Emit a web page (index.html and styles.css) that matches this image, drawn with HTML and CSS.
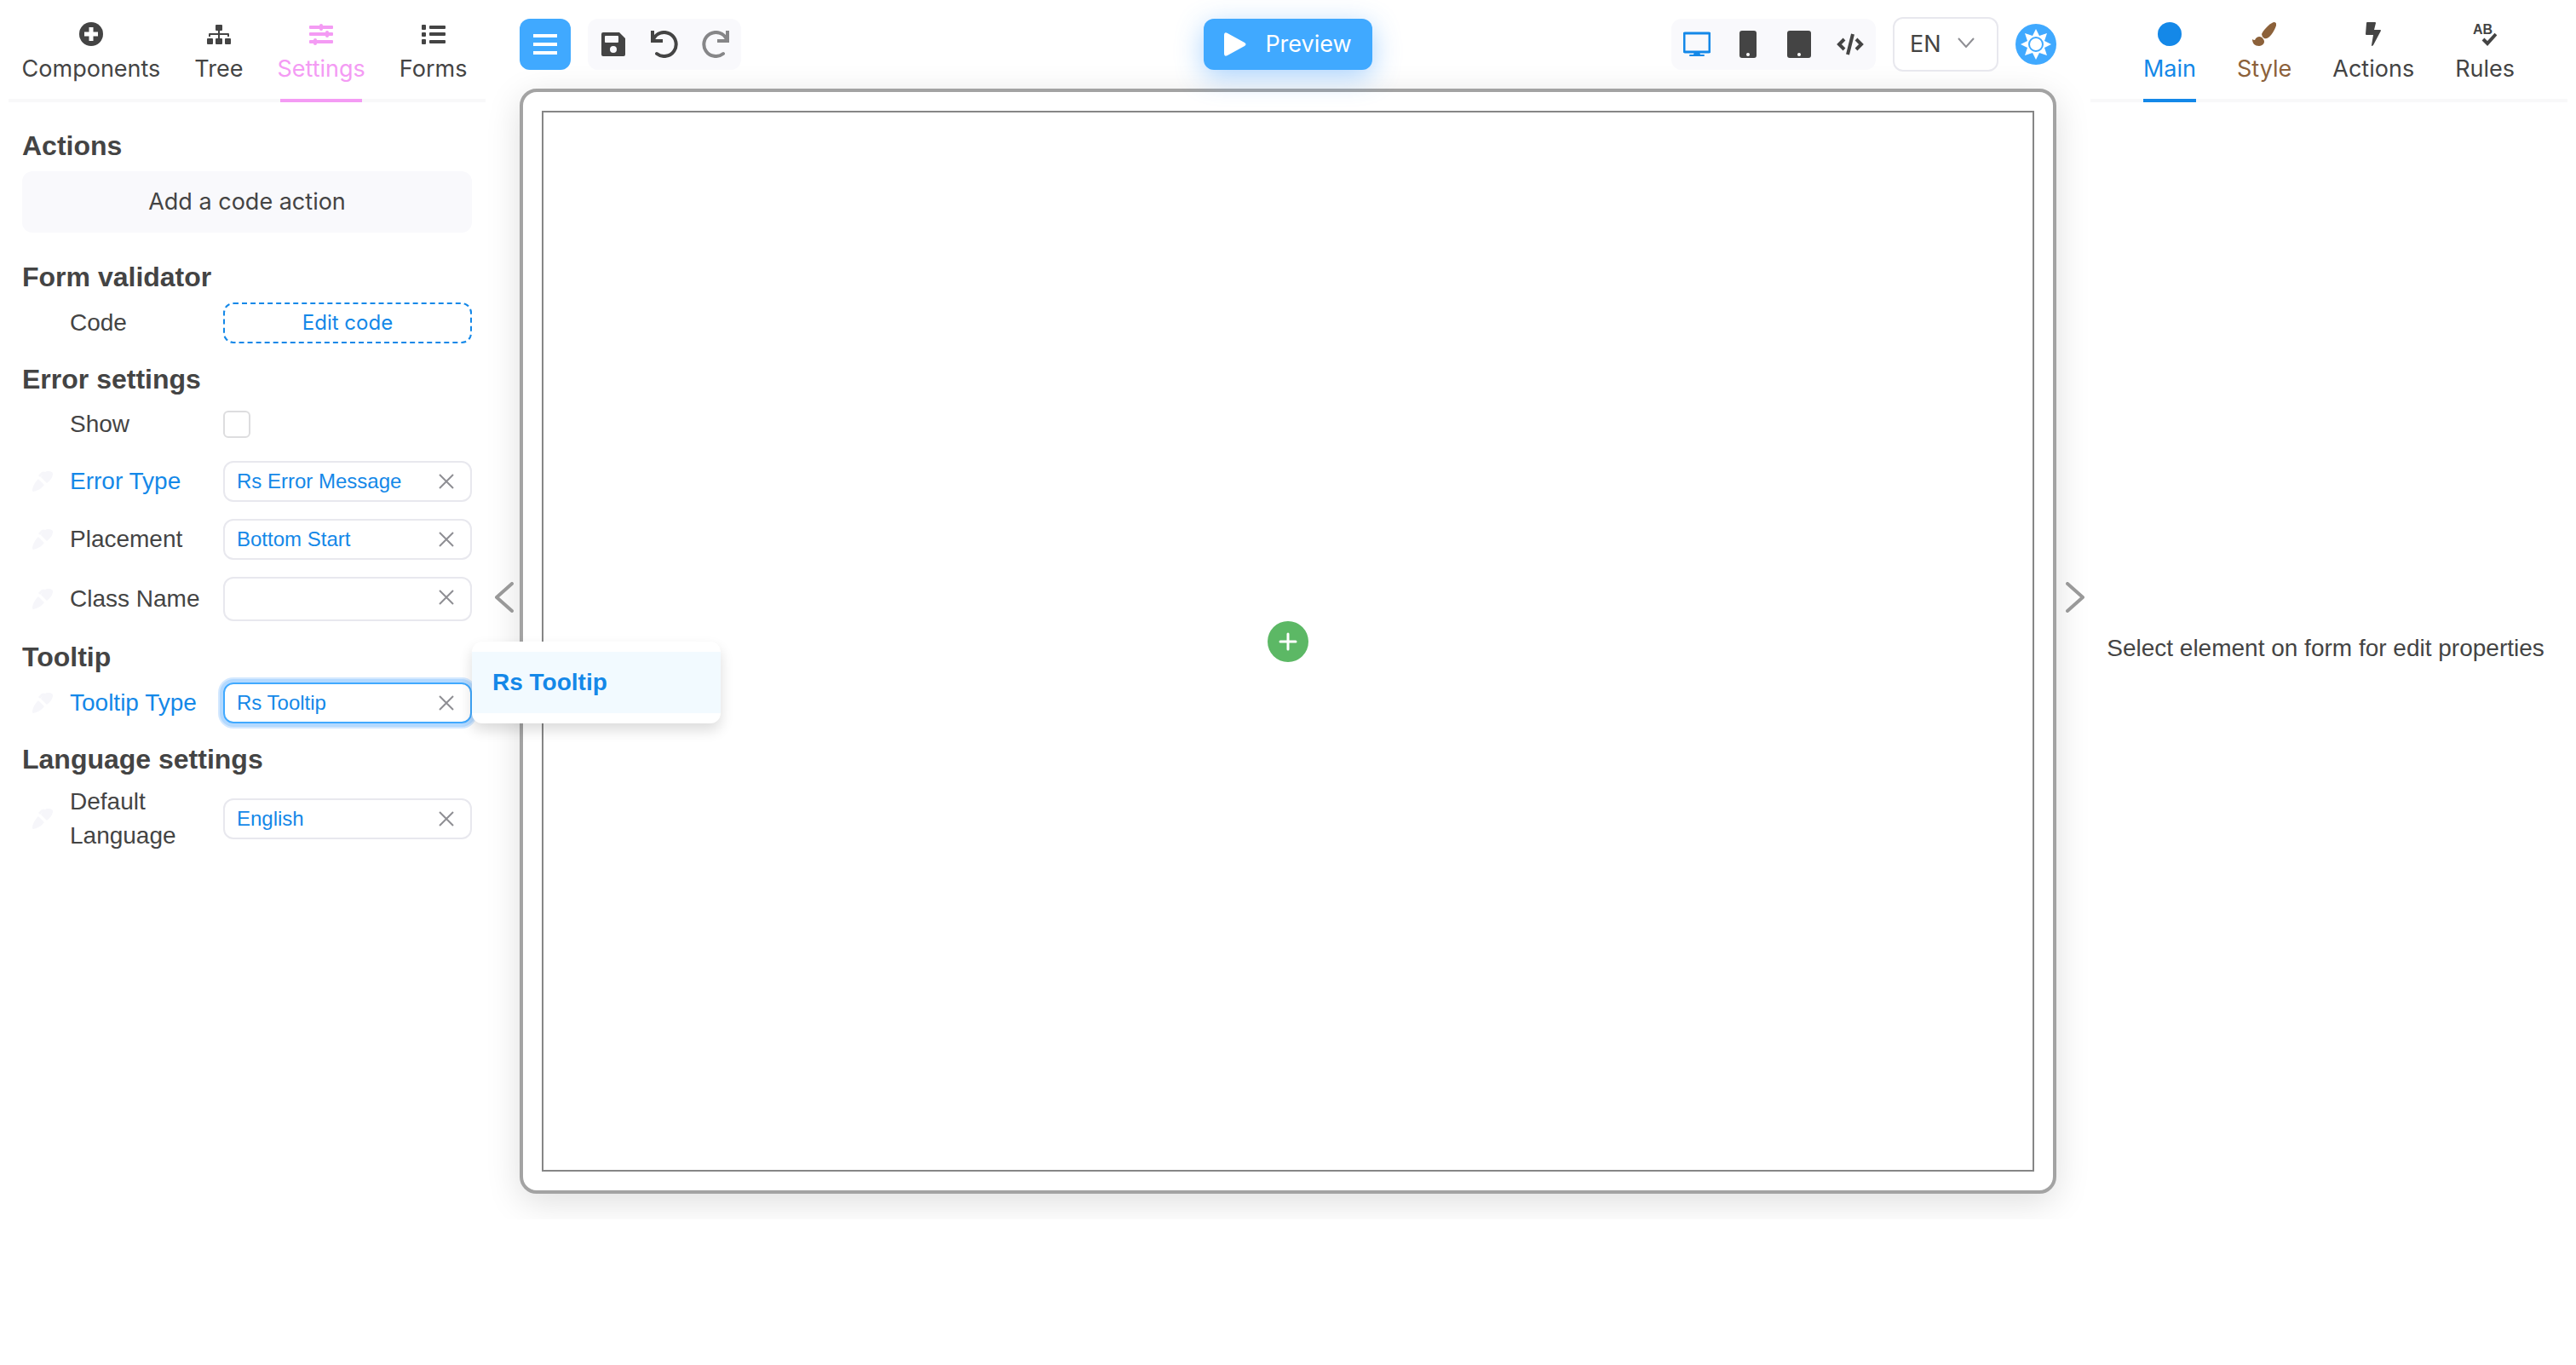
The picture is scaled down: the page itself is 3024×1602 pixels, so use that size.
FILE: index.html
```html
<!DOCTYPE html>
<html lang="en">
<head>
    <meta charset="UTF-8">
    <meta name="viewport" content="width=device-width, initial-scale=1.0">
    <title>Form designer</title>

    <link rel="stylesheet" href="styles.css">

</head>
<body>

    <!-- shared icons -->
    <svg class="icon-defs" aria-hidden="true">
        <symbol id="close" viewBox="0 0 18 18">
            <path d="M1 1L17 17M17 1L1 17" fill="none" stroke="#8e8e93" stroke-width="2"/>
        </symbol>
        <symbol id="dropper" viewBox="0 0 24 24">
            <path d="M7 5l4-4q2-1 4 0c3-2 9-1 9 2 0 4-3 8-7 11l-7-7 2-3-3 3zM7 9l7 7c-4 5-8 7-13 8l-1-1c0-5 3-10 7-14z" fill="#f6f6fa"/>
        </symbol>
    </svg>

    <div class="app">

        <aside class="panel panel-left">

            <nav class="tabs">
                <button class="tab">
                    <svg class="tab-icon" viewBox="0 0 28 28"><circle cx="14" cy="14" r="14" fill="currentColor"/><path d="M14 6v16M6 14h16" stroke="#fff" stroke-width="5"/></svg>
                    Components
                </button>
                <button class="tab">
                    <svg class="tab-icon" viewBox="0 0 28 28" fill="currentColor"><rect x="10" y="3" width="8" height="7" rx="1"/><rect y="19" width="7" height="7" rx="1"/><rect x="10" y="19" width="8" height="7" rx="1"/><rect x="21" y="19" width="7" height="7" rx="1"/><path d="M13 9h2v4h10q1 0 1 1v3h-2v-2h-9v4h-2v-4H4v2H2v-3q0-1 1-1h10z"/></svg>
                    Tree
                </button>
                <button class="tab tab-settings active">
                    <svg class="tab-icon" viewBox="0 0 28 28" fill="currentColor"><rect y="4" width="28" height="4" rx="1"/><rect y="12" width="28" height="4" rx="1"/><rect y="21" width="28" height="4" rx="1"/><rect x="12" y="2" width="4" height="8" rx="2"/><rect x="19" y="10" width="4" height="8" rx="2"/><rect x="5" y="19" width="4" height="8" rx="2"/></svg>
                    Settings
                </button>
                <button class="tab">
                    <svg class="tab-icon" viewBox="0 0 28 28" fill="currentColor"><rect y="3" width="5" height="6" rx="1"/><rect y="12" width="5" height="5" rx="1"/><rect y="20" width="5" height="6" rx="1"/><rect x="9" y="4" width="19" height="4" rx="1"/><rect x="9" y="12" width="19" height="4" rx="1"/><rect x="9" y="21" width="19" height="4" rx="1"/></svg>
                    Forms
                </button>
            </nav>

            <div class="settings">
                <h2>Actions</h2>
                <button class="btn-add">Add a code action</button>

                <h2 class="after-button">Form validator</h2>
                <div class="row">
                    <span class="label">Code</span>
                    <button class="btn-code">Edit code</button>
                </div>

                <h2>Error settings</h2>
                <div class="row row-check">
                    <label class="label" for="show">Show</label>
                    <input class="check" type="checkbox" id="show">
                </div>
                <div class="row">
                    <svg class="dropper"><use href="#dropper"/></svg>
                    <label class="label blue" for="error-type">Error Type</label>
                    <div class="control">
                        <select class="field" id="error-type"><option>Rs Error Message</option></select>
                        <button class="clear" aria-label="Clear"><svg><use href="#close"/></svg></button>
                    </div>
                </div>
                <div class="row">
                    <svg class="dropper"><use href="#dropper"/></svg>
                    <label class="label" for="placement">Placement</label>
                    <div class="control">
                        <select class="field" id="placement"><option>Bottom Start</option></select>
                        <button class="clear" aria-label="Clear"><svg><use href="#close"/></svg></button>
                    </div>
                </div>
                <div class="row">
                    <svg class="dropper"><use href="#dropper"/></svg>
                    <label class="label" for="class-name">Class Name</label>
                    <div class="control">
                        <input class="field field-text" type="text" id="class-name">
                        <button class="clear" aria-label="Clear"><svg><use href="#close"/></svg></button>
                    </div>
                </div>

                <h2>Tooltip</h2>
                <div class="row">
                    <svg class="dropper"><use href="#dropper"/></svg>
                    <label class="label blue" for="tooltip-type">Tooltip Type</label>
                    <div class="control">
                        <select class="field focused" id="tooltip-type"><option>Rs Tooltip</option></select>
                        <button class="clear" aria-label="Clear"><svg><use href="#close"/></svg></button>
                        <div class="dropdown">
                            <button class="dropdown-item">Rs Tooltip</button>
                        </div>
                    </div>
                </div>

                <h2>Language settings</h2>
                <div class="row">
                    <svg class="dropper"><use href="#dropper"/></svg>
                    <label class="label" for="language">Default Language</label>
                    <div class="control">
                        <select class="field" id="language"><option>English</option></select>
                        <button class="clear" aria-label="Clear"><svg><use href="#close"/></svg></button>
                    </div>
                </div>
            </div>

        </aside>

        <main class="center">

            <button class="toggle" aria-label="Hide left panel">
                <svg viewBox="0 0 22 36"><path d="M20 2L2 18l18 16"/></svg>
            </button>

            <div class="workspace">
                <div class="toolbar">
                    <div class="tools">
                        <button class="tool tool-menu" aria-label="Menu">
                            <svg viewBox="0 0 32 32" fill="#fff"><rect x="2" y="4" width="28" height="4"/><rect x="2" y="14" width="28" height="4"/><rect x="2" y="24" width="28" height="4"/></svg>
                        </button>
                        <div class="group">
                            <button class="tool" aria-label="Save">
                                <svg viewBox="0 0 32 32"><path fill="currentColor" fill-rule="evenodd" d="M4 2h19l7 7v19q0 2-2 2H4q-2 0-2-2V4q0-2 2-2zM7 6q-1 0-1 1v6q0 1 1 1h14q1 0 1-1V7q0-1-1-1zM16 18a4 4 0 1 0 0 8 4 4 0 0 0 0-8z"/></svg>
                            </button>
                            <button class="tool" aria-label="Undo">
                                <svg viewBox="0 0 32 32" fill="none" stroke="currentColor"><path d="M3 10A14 14 0 1 1 7 27" stroke-width="4" stroke-linecap="round"/><path d="M2 0v12h12" stroke-width="4"/></svg>
                            </button>
                            <button class="tool tool-off" aria-label="Redo">
                                <svg viewBox="0 0 32 32" fill="none" stroke="currentColor"><path d="M29 10A14 14 0 1 0 25 27" stroke-width="4" stroke-linecap="round"/><path d="M30 0v12H18" stroke-width="4"/></svg>
                            </button>
                        </div>
                    </div>

                    <button class="preview">
                        <svg viewBox="0 0 26 28"><path d="M0 3Q0-1 4 1l20 11q3 2 0 4L4 27q-4 2-4-2z" fill="#fff"/></svg>
                        Preview
                    </button>

                    <div class="tools tools-right">
                        <div class="group">
                            <button class="tool tool-on" aria-label="Desktop">
                                <svg viewBox="0 0 32 32"><rect x="1" y="3" width="30" height="22" rx="1" fill="none" stroke="currentColor" stroke-width="3"/><path d="M13 25h6l1 3h4q1 0 1 1t-1 1H8q-1 0-1-1t1-1h4z" fill="currentColor"/></svg>
                            </button>
                            <button class="tool" aria-label="Phone">
                                <svg viewBox="0 0 32 32"><rect x="6" width="20" height="32" rx="3" fill="currentColor"/><circle cx="16" cy="28" r="2" fill="#fff"/></svg>
                            </button>
                            <button class="tool" aria-label="Tablet">
                                <svg viewBox="0 0 32 32"><rect x="2" width="28" height="32" rx="3" fill="currentColor"/><circle cx="16" cy="28" r="2" fill="#fff"/></svg>
                            </button>
                            <button class="tool" aria-label="Code">
                                <svg viewBox="0 0 32 32" fill="none" stroke="currentColor" stroke-width="4"><path d="M9 10l-6 6 6 6M23 10l6 6-6 6M19 4l-6 24"/></svg>
                            </button>
                        </div>
                        <div class="lang">
                            <select aria-label="Language"><option>EN</option></select>
                            <svg viewBox="0 0 20 12"><path d="M1 1l9 10 9-10" fill="none" stroke="#8e8e93" stroke-width="2"/></svg>
                        </div>
                        <button class="theme" aria-label="Theme">
                            <svg viewBox="0 0 48 48"><path d="M24 6l4 8 9-3-3 9 8 4-8 4 3 9-9-3-4 8-4-8-9 3 3-9-8-4 8-4-3-9 9 3z" fill="#fff"/><circle cx="24" cy="24" r="8" fill="#fff" stroke="#40a9ff" stroke-width="2"/></svg>
                        </button>
                    </div>
                </div>

                <div class="frame">
                    <div class="form-area">
                        <button class="add" aria-label="Add component">
                            <svg viewBox="0 0 22 22"><path d="M11 2v18M2 11h18" stroke="#fff" stroke-width="3" stroke-linecap="round"/></svg>
                        </button>
                    </div>
                </div>
            </div>

            <button class="toggle" aria-label="Hide right panel">
                <svg viewBox="0 0 22 36"><path d="M2 2l18 16L2 34"/></svg>
            </button>

        </main>

        <aside class="panel panel-right">

            <nav class="tabs">
                <button class="tab tab-main active">
                    <svg class="tab-icon" viewBox="0 0 28 28"><circle cx="14" cy="14" r="14" fill="currentColor"/></svg>
                    Main
                </button>
                <button class="tab tab-style">
                    <svg class="tab-icon" viewBox="0 0 28 28" fill="currentColor"><path d="M25 0q4 0 3 4c-2 6-6 12-9 14q-3 2-5 1-3-2-3-5C13 9 20 2 25 0z"/><path d="M0 20q1 1 3 1c2-5 8-5 10-1 3 4-1 8-5 8-5 0-8-3-8-8z"/></svg>
                    Style
                </button>
                <button class="tab">
                    <svg class="tab-icon" viewBox="0 0 28 28"><path d="M7 0h9q1 0 1 1l-2 8h7q1 0 1 1l-9 17q-1 1-2 1v-1l2-12H6q-1 0-1-1L6 1q0-1 1-1z" fill="currentColor"/></svg>
                    Actions
                </button>
                <button class="tab">
                    <svg class="tab-icon" viewBox="0 0 28 28"><text x="0" y="14" class="ab">AB</text><path d="M12 20l5 5 10-11" fill="none" stroke="currentColor" stroke-width="4"/></svg>
                    Rules
                </button>
            </nav>

            <p class="empty">Select element on form for edit properties</p>

        </aside>

    </div>

</body>
</html>
```
FILE: styles.css
```css
:root {
    --text: #444444;
    --blue: #1488e8;
    --light-blue: #40a9ff;
    --pink: #f49bf4;
    --brown: #8c613a;
    --grey-bg: #f9f9fc;
    --border: #e8e8ee;
    --ui-font: Inter, "Liberation Sans", sans-serif;
}

*, *::before, *::after {
    margin: 0;
    padding: 0;
    box-sizing: border-box;
}

body {
    background-color: white;
    color: var(--text);
    font-family: "Liberation Sans", Arial, sans-serif;
    font-size: 28px;
    line-height: 40px;
}

button, input, select {
    font: inherit;
    color: inherit;
    border: none;
    background: none;
    outline: none;
    appearance: none;
}

button {
    cursor: pointer;
}

svg {
    display: block;
    flex: none;
}

.icon-defs {
    position: absolute;
    width: 0;
    height: 0;
}

.app {
    display: grid;
    grid-template-columns: 570px 1fr 570px;
    height: calc(100vh - 171px);
    min-height: 1100px;
}

/* side panels */

.panel {
    display: flex;
    flex-direction: column;
    padding-bottom: 30px;
}

.panel-left {
    position: relative;
    z-index: 1;
    padding-left: 10px;
}

.panel-right {
    padding-right: 10px;
}

.tabs {
    display: flex;
    justify-content: center;
    gap: 40px;
    border-bottom: 4px solid #f8f8f9;
}

.panel-left .tabs {
    padding-right: 6px;
}

.panel-right .tabs {
    gap: 48px;
}

.tab {
    position: relative;
    display: flex;
    flex-direction: column;
    align-items: center;
    gap: 7px;
    padding: 26px 0 15px;
    font-family: var(--ui-font);
    font-size: 27px;
}

.tab.active::after {
    content: '';
    position: absolute;
    left: 0;
    right: 0;
    bottom: -4px;
    height: 4px;
    background-color: currentColor;
}

.tab-settings.active::after {
    left: 4px;
    right: 4px;
}

.tab-icon {
    width: 28px;
    height: 28px;
}

.tab-settings {
    color: var(--pink);
}

.tab-main {
    color: var(--blue);
}

.tab-style {
    color: var(--brown);
}

.ab {
    font: bold 16px "Liberation Sans", sans-serif;
    fill: currentColor;
}

.empty {
    margin: auto;
    padding-right: 8px;
}

/* settings form */

.settings {
    display: flex;
    flex-direction: column;
    padding: 9px 16px;
}

h2 {
    margin: 20px 0 8px;
    font-size: 32px;
    line-height: 44px;
}

.after-button {
    margin-top: 30px;
}

.btn-add {
    height: 72px;
    border-radius: 12px;
    background-color: var(--grey-bg);
    font-family: var(--ui-font);
    font-size: 27px;
}

.row {
    display: grid;
    grid-template-columns: 56px 1fr 292px;
    align-items: center;
}

.row + .row {
    margin-top: 20px;
}

.row-check {
    height: 46px;
}

.dropper {
    grid-column: 1;
    width: 24px;
    height: 24px;
    margin-left: 12px;
}

.label {
    grid-column: 2;
}

.blue {
    color: var(--blue);
}

.btn-code {
    height: 48px;
    border: 2px dashed var(--blue);
    border-radius: 12px;
    color: var(--blue);
    font-family: var(--ui-font);
    font-size: 24px;
}

.check {
    width: 32px;
    height: 32px;
    border: 2px solid #dddddf;
    border-radius: 6px;
}

.control {
    position: relative;
    display: flex;
}

.field {
    width: 100%;
    height: 48px;
    padding: 0 48px 0 14px;
    border: 2px solid var(--border);
    border-radius: 12px;
    color: var(--blue);
    font-size: 24px;
}

.field-text {
    height: 52px;
}

.focused {
    border-color: var(--light-blue);
    box-shadow: 0 0 0 4px #b3d9ff, 0 0 0 6px #d3e8ff;
}

.clear {
    position: absolute;
    top: 0;
    right: 6px;
    display: flex;
    align-items: center;
    justify-content: center;
    width: 48px;
    height: 48px;
}

.clear svg {
    width: 18px;
    height: 18px;
}

.dropdown {
    position: absolute;
    left: 100%;
    bottom: 0;
    width: 292px;
    padding: 12px 0;
    border-radius: 12px;
    background-color: white;
    box-shadow: 0 8px 16px rgba(0, 0, 0, 0.14);
}

.dropdown-item {
    width: 100%;
    height: 72px;
    padding: 0 24px;
    background-color: #f2faff;
    color: var(--blue);
    font-weight: bold;
    text-align: left;
}

/* workspace */

.center {
    display: grid;
    grid-template-columns: 40px 1fr 40px;
    padding-bottom: 30px;
    overflow: hidden;
}

.toggle {
    display: flex;
    justify-content: center;
    align-self: center;
    padding-left: 4px;
    z-index: 1;
}

.toggle svg {
    width: 22px;
    height: 36px;
    fill: none;
    stroke: #999999;
    stroke-width: 4px;
    stroke-linecap: round;
    stroke-linejoin: round;
}

.workspace {
    display: flex;
    flex-direction: column;
}

.toolbar {
    position: relative;
    z-index: 1;
    display: grid;
    grid-template-columns: 1fr auto 1fr;
    align-items: center;
    height: 104px;
}

.tools {
    display: flex;
    align-items: center;
    gap: 20px;
}

.tools-right {
    justify-content: flex-end;
}

.group {
    display: flex;
    border-radius: 12px;
    background-color: var(--grey-bg);
}

.tool {
    display: flex;
    align-items: center;
    justify-content: center;
    width: 60px;
    height: 60px;
}

.tool svg {
    width: 32px;
    height: 32px;
}

.tool-menu {
    border-radius: 12px;
    background-color: var(--light-blue);
}

.tool-on {
    color: var(--blue);
}

.tool-off {
    color: #868688;
}

.preview {
    display: flex;
    align-items: center;
    gap: 22px;
    height: 60px;
    padding: 0 24px;
    border-radius: 12px;
    background-color: var(--light-blue);
    box-shadow: 0 8px 32px rgba(64, 158, 255, 0.45);
    color: white;
    font-family: var(--ui-font);
    font-size: 27px;
}

.preview svg {
    width: 26px;
    height: 28px;
}

.lang {
    position: relative;
}

.lang select {
    display: block;
    width: 124px;
    height: 64px;
    padding: 0 18px;
    border: 2px solid var(--border);
    border-radius: 12px;
    background-color: white;
    font-family: var(--ui-font);
    font-size: 27px;
}

.lang svg {
    position: absolute;
    top: 24px;
    right: 28px;
    width: 20px;
    height: 12px;
    pointer-events: none;
}

.theme {
    width: 48px;
    height: 48px;
    border-radius: 50%;
    background-color: var(--light-blue);
}

.frame {
    display: flex;
    flex: 1;
    padding: 22px;
    border: 4px solid #a3a3a3;
    border-radius: 20px;
    background-color: white;
    box-shadow: 0 10px 40px rgba(0, 0, 0, 0.13);
}

.form-area {
    display: flex;
    flex: 1;
    align-items: center;
    justify-content: center;
    border: 2px solid #868686;
}

.add {
    display: flex;
    align-items: center;
    justify-content: center;
    width: 48px;
    height: 48px;
    border-radius: 50%;
    background-color: #5cb865;
}

.add svg {
    width: 22px;
    height: 22px;
}
```
